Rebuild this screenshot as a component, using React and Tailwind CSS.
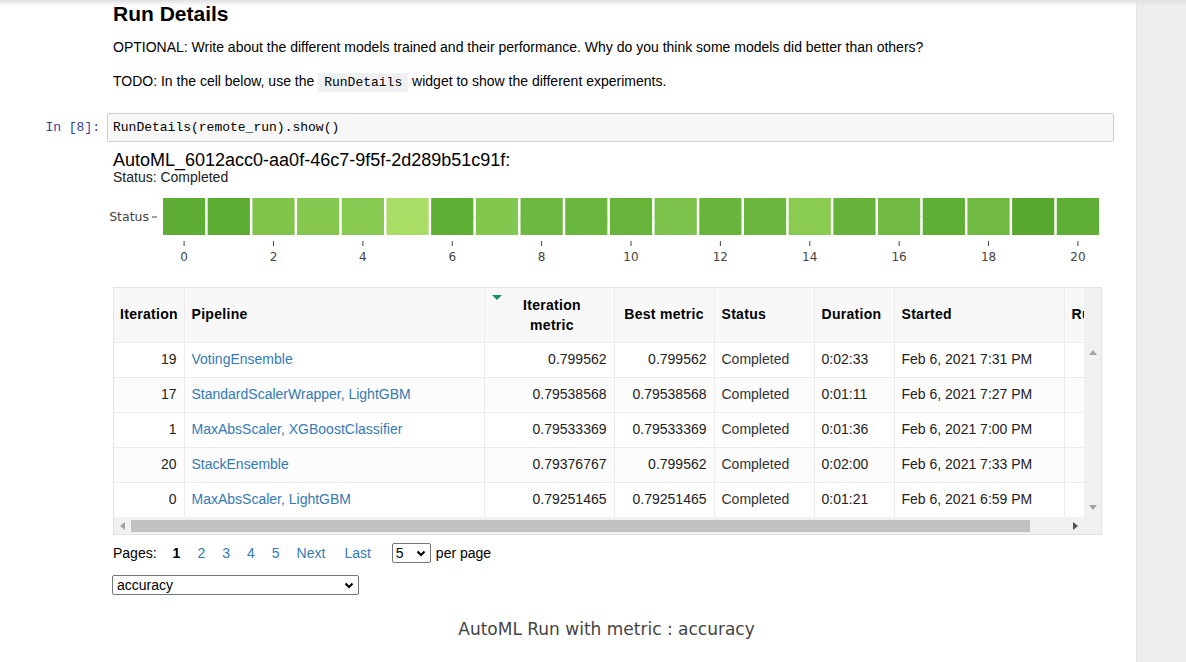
import React from "react";

const barColors = [
  "#5dad34", "#5cac33", "#80c44c", "#86c84f", "#88c951", "#a9dd66", "#5fae35",
  "#84c74f", "#6db83f", "#6ab73d", "#66b43a", "#7cc14a", "#67b53b", "#6bb73d",
  "#8acb52", "#65b33a", "#71ba42", "#5eae34", "#70ba41", "#58a82f", "#5fae35",
];

const rows = [
  { it: 19, pipe: "VotingEnsemble", im: "0.799562", bm: "0.799562", dur: "0:02:33", st: "Feb 6, 2021 7:31 PM" },
  { it: 17, pipe: "StandardScalerWrapper, LightGBM", im: "0.79538568", bm: "0.79538568", dur: "0:01:11", st: "Feb 6, 2021 7:27 PM" },
  { it: 1, pipe: "MaxAbsScaler, XGBoostClassifier", im: "0.79533369", bm: "0.79533369", dur: "0:01:36", st: "Feb 6, 2021 7:00 PM" },
  { it: 20, pipe: "StackEnsemble", im: "0.79376767", bm: "0.799562", dur: "0:02:00", st: "Feb 6, 2021 7:33 PM" },
  { it: 0, pipe: "MaxAbsScaler, LightGBM", im: "0.79251465", bm: "0.79251465", dur: "0:01:21", st: "Feb 6, 2021 6:59 PM" },
];

function StatusChart() {
  const pitch = 44.69;
  return (
    <svg width="990" height="82" className="block ml-[-3px] mt-[1px]">
      <line x1="53" y1="30.5" x2="989" y2="30.5" stroke="#ebebeb" strokeWidth="1" />
      {barColors.map((c, i) => (
        <rect key={i} x={53 + i * pitch} y="12" width="42.2" height="37" fill={c} />
      ))}
      <text x="39" y="35" textAnchor="end" fontFamily="DejaVu Sans, sans-serif" fontSize="12.5" fill="#444">
        Status
      </text>
      <line x1="42" y1="31" x2="47" y2="31" stroke="#444" strokeWidth="1" />
      {barColors.map((_, i) =>
        i % 2 === 0 ? (
          <g key={i}>
            <line x1={74.1 + i * pitch} y1="55" x2={74.1 + i * pitch} y2="60" stroke="#444" strokeWidth="1" />
            <text x={74.1 + i * pitch} y="75" textAnchor="middle" fontFamily="DejaVu Sans, sans-serif" fontSize="12" fill="#444">
              {i}
            </text>
          </g>
        ) : null
      )}
    </svg>
  );
}

function Chevron() {
  return (
    <svg width="10" height="7" viewBox="0 0 10 7">
      <path d="M1.5 1.5 L5 5 L8.5 1.5" fill="none" stroke="#000" strokeWidth="2" />
    </svg>
  );
}

function Triangle({ dir, color }) {
  const d = {
    up: "M0 5 L4 0 L8 5 Z",
    down: "M0 0 L8 0 L4 5 Z",
    left: "M5 0 L5 8 L0 4 Z",
    right: "M0 0 L5 4 L0 8 Z",
  }[dir];
  const w = dir === "up" || dir === "down" ? 8 : 5;
  const h = dir === "up" || dir === "down" ? 5 : 8;
  return (
    <svg width={w} height={h} viewBox={`0 0 ${w} ${h}`}>
      <path d={d} fill={color} />
    </svg>
  );
}

function RunsTable() {
  const th = "border border-[#ececec] font-bold text-[14px] tracking-[0.3px] text-[#000] align-middle";
  const td = "border border-[#ececec] text-[14px] align-middle whitespace-nowrap";
  return (
    <div className="w-[989px] border border-[#e3e3e3] flex flex-col">
      <div className="flex h-[229px]">
        <div className="w-[970px] overflow-hidden">
          <table className="table-fixed border-collapse w-[1050px] border-hidden">
            <colgroup>
              <col className="w-[70px]" />
              <col className="w-[300px]" />
              <col className="w-[130px]" />
              <col className="w-[100px]" />
              <col className="w-[100px]" />
              <col className="w-[80px]" />
              <col className="w-[170px]" />
              <col className="w-[100px]" />
            </colgroup>
            <thead>
              <tr className="h-[54px] bg-[#f8f8f8]">
                <th className={`${th} text-left pl-[6px]`}>Iteration</th>
                <th className={`${th} text-left pl-[7px]`}>Pipeline</th>
                <th className={`${th} text-center leading-[20px] pl-[6px] relative`}>
                  <svg width="10" height="5" viewBox="0 0 10 5" className="absolute left-[7px] top-[7px]">
                    <path d="M0 0 L10 0 L5 5 Z" fill="#1b8f62" />
                  </svg>
                  Iteration
                  <br />
                  metric
                </th>
                <th className={`${th} text-center`}>Best metric</th>
                <th className={`${th} text-left pl-[7px]`}>Status</th>
                <th className={`${th} text-left pl-[7px]`}>Duration</th>
                <th className={`${th} text-left pl-[7px]`}>Started</th>
                <th className={`${th} text-left pl-[7px]`}>Run Id</th>
              </tr>
            </thead>
            <tbody>
              {rows.map((r, i) => (
                <tr key={r.it} className={`h-[35px] ${i % 2 === 1 ? "bg-[#fcfcfc]" : "bg-white"}`}>
                  <td className={`${td} text-right pr-[7px] text-[#222]`}>{r.it}</td>
                  <td className={`${td} pl-[7px] text-[#337ab7]`}>{r.pipe}</td>
                  <td className={`${td} text-right pr-[7px] text-[#222]`}>{r.im}</td>
                  <td className={`${td} text-right pr-[7px] text-[#222]`}>{r.bm}</td>
                  <td className={`${td} pl-[7px] text-[#333]`}>Completed</td>
                  <td className={`${td} pl-[7px] text-[#222]`}>{r.dur}</td>
                  <td className={`${td} pl-[7px] text-[#222]`}>{r.st}</td>
                  <td className={td}></td>
                </tr>
              ))}
            </tbody>
          </table>
        </div>
        <div className="w-[17px] bg-[#f1f1f1] flex flex-col items-center">
          <div className="mt-[62px]">
            <Triangle dir="up" color="#a3a3a3" />
          </div>
          <div className="mt-auto mb-[7px]">
            <Triangle dir="down" color="#a3a3a3" />
          </div>
        </div>
      </div>
      <div className="h-[17px] bg-[#f1f1f1] flex items-center">
        <div className="w-[17px] flex justify-center">
          <Triangle dir="left" color="#a3a3a3" />
        </div>
        <div className="w-[899px] h-[12px] bg-[#c1c1c1]"></div>
        <div className="w-[54px] flex justify-end pr-[6px]">
          <Triangle dir="right" color="#505050" />
        </div>
        <div className="w-[17px]"></div>
      </div>
    </div>
  );
}

export default function App() {
  return (
    <div className="w-[1186px] h-[662px] overflow-hidden flex font-['Liberation_Sans',Arial,sans-serif] text-black">
      <div className="w-[1136px] bg-[linear-gradient(to_bottom,#e0e0e0_0px,#ffffff_6px)]">
        <div className="pl-[113px]">
          <h2 className="text-[21px] font-bold leading-[28px] h-[28px]">Run Details</h2>
          <p className="mt-[9px] text-[14px] leading-[20px]">
            OPTIONAL: Write about the different models trained and their performance. Why do you think some models did better than others?
          </p>
          <p className="mt-[14px] text-[14px] leading-[20px]">
            TODO: In the cell below, use the{" "}
            <code className="font-['Liberation_Mono',monospace] text-[13px] bg-[#eff0f1] px-[6px] py-[2px]">RunDetails</code>{" "}
            widget to show the different experiments.
          </p>
        </div>

        <div className="flex mt-[20px]">
          <div className="w-[107px] pr-[7px] text-right leading-[29px] font-['Liberation_Mono',monospace] text-[13px] text-[#303f9f]">
            In [8]:
          </div>
          <div className="w-[1007px] h-[29px] border border-[#cfcfcf] bg-[#f7f7f7] rounded-[2px] pl-[5px] leading-[27px] font-['Liberation_Mono',monospace] text-[13px]">
            RunDetails(remote_run).show()
          </div>
        </div>

        <div className="pl-[113px] pt-[8px]">
          <div className="text-[18px] leading-[20px]">AutoML_6012acc0-aa0f-46c7-9f5f-2d289b51c91f:</div>
          <div className="text-[14px] leading-[16px] mt-[-1px] text-[#222]">Status: Completed</div>
          <StatusChart />
          <div className="mt-[19px]">
            <RunsTable />
          </div>

          <div className="mt-[8px] h-[20px] flex items-center text-[14px]">
            <span>Pages:</span>
            <span className="ml-[16px] font-bold">1</span>
            <span className="ml-[17px] text-[#337ab7]">2</span>
            <span className="ml-[17px] text-[#337ab7]">3</span>
            <span className="ml-[17px] text-[#337ab7]">4</span>
            <span className="ml-[17px] text-[#337ab7]">5</span>
            <span className="ml-[17px] text-[#337ab7]">Next</span>
            <span className="ml-[19px] text-[#337ab7]">Last</span>
            <div className="ml-[21px] w-[39px] h-[20px] border border-[#767676] rounded-[2px] flex items-center justify-between pl-[3px] pr-[4px]">
              <span>5</span>
              <Chevron />
            </div>
            <span className="ml-[5px]">per page</span>
          </div>

          <div className="mt-[12px] ml-[-1px] w-[247px] h-[20px] border border-[#767676] rounded-[2px] flex items-center justify-between pl-[4px] pr-[4px] text-[14px]">
            <span>accuracy</span>
            <Chevron />
          </div>

          <div className="mt-[24px] w-[987px] text-center font-['DejaVu_Sans',sans-serif] text-[17px] leading-[20px] text-[#444]">
            AutoML Run with metric : accuracy
          </div>
        </div>
      </div>
      <div className="w-[50px] border-l border-[#e4e4e4] bg-[linear-gradient(to_bottom,#e0e0e0_0px,#ededed_6px)]"></div>
    </div>
  );
}
